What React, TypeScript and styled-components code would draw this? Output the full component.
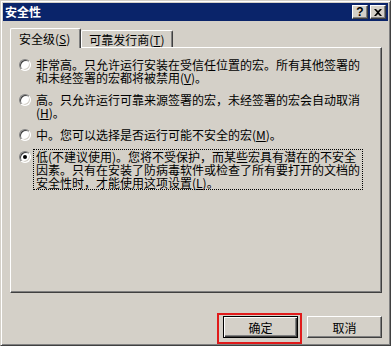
import React from "react";
import styled, { createGlobalStyle } from "styled-components";

const GlobalStyle = createGlobalStyle`
  html, body {
    margin: 0;
    padding: 0;
    background: #d4d0c8;
  }
  body {
    font-family: "Noto Sans CJK SC", "Liberation Sans", sans-serif;
    font-size: 12px;
    color: #000;
  }
`;

interface Option {
  key: string;
  lines: React.ReactNode[];
  checked?: boolean;
}

const options: Option[] = [
  {
    key: "v",
    lines: [
      "非常高。只允许运行安装在受信任位置的宏。所有其他签署的",
      <>和未经签署的宏都将被禁用(<u>V</u>)。</>,
    ],
  },
  {
    key: "h",
    lines: [
      "高。只允许运行可靠来源签署的宏，未经签署的宏会自动取消",
      <>(<u>H</u>)。</>,
    ],
  },
  {
    key: "m",
    lines: [<>中。您可以选择是否运行可能不安全的宏(<u>M</u>)。</>],
  },
  {
    key: "l",
    checked: true,
    lines: [
      "低(不建议使用)。您将不受保护，而某些宏具有潜在的不安全",
      "因素。只有在安装了防病毒软件或检查了所有要打开的文档的",
      <>安全性时，才能使用这项设置(<u>L</u>)。</>,
    ],
  },
];

export default function App() {
  return (
    <>
      <GlobalStyle />
      <Window>
        <TitleBar>
          <Title>安全性</Title>
          <CaptionButtons>
            <CaptionButton>?</CaptionButton>
            <CaptionButton>
              <svg width="8" height="7" viewBox="0 0 8 7">
                <path d="M0 0h2l2 2 2-2h2L5 3.5 8 7H6L4 5 2 7H0l3-3.5z" fill="#000" />
              </svg>
            </CaptionButton>
          </CaptionButtons>
        </TitleBar>

        <Body>
          <TabBar>
            <Tab $active>
              安全级(<u>S</u>)
            </Tab>
            <Tab>
              可靠发行商(<u>T</u>)
            </Tab>
          </TabBar>

          <Panel>
            {options.map((o) => (
              <OptionRow key={o.key}>
                <Radio $checked={o.checked} />
                <OptionLabel $focused={o.checked}>
                  {o.lines.map((line, i) => (
                    <Line key={i}>{line}</Line>
                  ))}
                </OptionLabel>
              </OptionRow>
            ))}
          </Panel>

          <ButtonRow>
            <Highlight>
              <PushButton $default>确定</PushButton>
            </Highlight>
            <PushButton>取消</PushButton>
          </ButtonRow>
        </Body>
      </Window>
    </>
  );
}

// -------------------------- style --------------------------

const Window = styled.div`
  box-sizing: border-box;
  width: 391px;
  height: 346px;
  padding: 2px;
  border: 1px solid;
  border-color: #d4d0c8 #404040 #404040 #d4d0c8;
  box-shadow: inset 1px 1px #fff, inset -1px -1px #808080;
  background: #d4d0c8;
`;

const TitleBar = styled.div`
  display: flex;
  justify-content: space-between;
  align-items: center;
  height: 18px;
  padding: 0 2px;
  background: #0a246a;
`;

const Title = styled.span`
  color: #fff;
  font-weight: bold;
  font-size: 12px;
  line-height: 18px;
`;

const CaptionButtons = styled.div`
  display: flex;
  gap: 2px;
`;

const CaptionButton = styled.span`
  box-sizing: border-box;
  display: flex;
  align-items: center;
  justify-content: center;
  width: 16px;
  height: 14px;
  background: #d4d0c8;
  border: 1px solid;
  border-color: #fff #404040 #404040 #fff;
  box-shadow: inset -1px -1px #808080;
  font-family: "Liberation Sans", sans-serif;
  font-weight: bold;
  font-size: 12px;
  line-height: 1;
`;

const Body = styled.div`
  padding: 8px 6px 0 7px;
`;

const TabBar = styled.div`
  display: flex;
  align-items: flex-end;
  height: 19px;
  position: relative;
  z-index: 1;
  margin-bottom: -1px;
`;

const Tab = styled.div<{ $active?: boolean }>`
  box-sizing: border-box;
  height: ${(p) => (p.$active ? "20px" : "17px")};
  padding: ${(p) => (p.$active ? "2px 10px 0 8px" : "1px 7px 0 7px")};
  margin-bottom: ${(p) => (p.$active ? "0" : "1px")};
  line-height: 15px;
  background: #d4d0c8;
  border-top: 1px solid #fff;
  border-left: 1px solid #fff;
  border-right: 1px solid #404040;
  border-radius: 2px 2px 0 0;
  box-shadow: inset -1px 0 #808080;
  white-space: nowrap;
`;

const Panel = styled.div`
  box-sizing: border-box;
  display: flex;
  flex-direction: column;
  gap: 7px;
  height: 246px;
  padding: 9px 8px 0 8px;
  border: 1px solid;
  border-color: #fff #404040 #404040 #fff;
  box-shadow: inset -1px -1px #808080;
`;

const OptionRow = styled.div`
  display: flex;
  align-items: flex-start;
  gap: 2px;
`;

const Radio = styled.span<{ $checked?: boolean }>`
  box-sizing: border-box;
  position: relative;
  flex: none;
  width: 12px;
  height: 12px;
  margin-top: 2px;
  border-radius: 50%;
  background: #fff;
  border: 1px solid;
  border-color: #808080 #fff #fff #808080;
  box-shadow: inset 1px 1px #404040, inset -1px -1px #d4d0c8;

  &::after {
    content: "";
    display: ${(p) => (p.$checked ? "block" : "none")};
    position: absolute;
    left: 3px;
    top: 3px;
    width: 4px;
    height: 4px;
    border-radius: 50%;
    background: #000;
  }
`;

const OptionLabel = styled.div<{ $focused?: boolean }>`
  display: inline-block;
  padding: 0 2px;
  border: 1px dotted ${(p) => (p.$focused ? "#000" : "transparent")};
  line-height: 13px;
`;

const Line = styled.div`
  white-space: nowrap;
`;

const ButtonRow = styled.div`
  display: flex;
  justify-content: flex-end;
  align-items: center;
  gap: 9px;
  margin-top: 23px;
`;

const Highlight = styled.div`
  position: relative;
  display: flex;

  &::after {
    content: "";
    position: absolute;
    inset: -3px -4px -6px -6px;
    border: 2px solid #e01a1a;
    pointer-events: none;
  }
`;

const PushButton = styled.button<{ $default?: boolean }>`
  box-sizing: border-box;
  width: 75px;
  height: 22px;
  padding: 0;
  font-family: "Noto Sans CJK SC", "Liberation Sans", sans-serif;
  font-size: 12px;
  color: #000;
  background: #d4d0c8;
  border: 1px solid;
  border-color: ${(p) => (p.$default ? "#000" : "#fff #404040 #404040 #fff")};
  box-shadow: ${(p) =>
    p.$default
      ? "inset 1px 1px #fff, inset -1px -1px #404040, inset -2px -2px #808080"
      : "inset -1px -1px #808080"};
`;
